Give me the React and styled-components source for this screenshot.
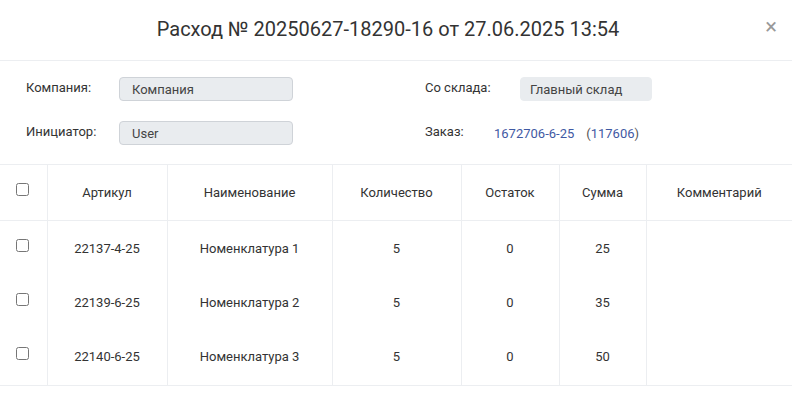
import React from "react";
import styled, { createGlobalStyle } from "styled-components";

const GlobalStyle = createGlobalStyle`
  html, body {
    margin: 0;
    padding: 0;
    background: #fff;
  }
  body {
    font-family: Roboto, "Liberation Sans", sans-serif;
    color: #333;
  }
`;

const rows = [
  { id: 1, sku: "22137-4-25", name: "Номенклатура 1", qty: 5, rest: 0, sum: 25 },
  { id: 2, sku: "22139-6-25", name: "Номенклатура 2", qty: 5, rest: 0, sum: 35 },
  { id: 3, sku: "22140-6-25", name: "Номенклатура 3", qty: 5, rest: 0, sum: 50 },
];

const App = () => {
  return (
    <Modal>
      <GlobalStyle />
      <Header>
        <Title>Расход № 20250627-18290-16 от 27.06.2025 13:54</Title>
        <Close>×</Close>
      </Header>

      {/* шапка документа: компания, склад, инициатор, заказ */}
      <Info>
        <InfoColumn>
          <InfoRow>
            <Label width="93px">Компания:</Label>
            <Field width="174px" bordered>Компания</Field>
          </InfoRow>
          <InfoRow>
            <Label width="93px">Инициатор:</Label>
            <Field width="174px" bordered>User</Field>
          </InfoRow>
        </InfoColumn>
        <InfoColumn>
          <InfoRow>
            <Label width="95px">Со склада:</Label>
            <Field width="132px">Главный склад</Field>
          </InfoRow>
          <InfoRow>
            <Label width="69px">Заказ:</Label>
            <Link href="#">1672706-6-25</Link>
            <Paren>
              (<Link href="#">117606</Link>)
            </Paren>
          </InfoRow>
        </InfoColumn>
      </Info>

      <Table>
        <colgroup>
          <col style={{ width: 47 }} />
          <col style={{ width: 120 }} />
          <col style={{ width: 165 }} />
          <col style={{ width: 129 }} />
          <col style={{ width: 98 }} />
          <col style={{ width: 87 }} />
          <col />
        </colgroup>
        <thead>
          <tr>
            <Th check>
              <Check type="checkbox" />
            </Th>
            <Th>Артикул</Th>
            <Th>Наименование</Th>
            <Th>Количество</Th>
            <Th>Остаток</Th>
            <Th>Сумма</Th>
            <Th>Комментарий</Th>
          </tr>
        </thead>
        <tbody>
          {rows.map((row) => (
            <Row key={row.id}>
              <Td check>
                <Check type="checkbox" />
              </Td>
              <Td>{row.sku}</Td>
              <Td>{row.name}</Td>
              <Td>{row.qty}</Td>
              <Td>{row.rest}</Td>
              <Td>{row.sum}</Td>
              <Td></Td>
            </Row>
          ))}
        </tbody>
      </Table>
    </Modal>
  );
};

const Modal = styled.div`
  width: 792px;
  background: #fff;
`;

const Header = styled.div`
  position: relative;
  display: flex;
  align-items: center;
  justify-content: center;
  height: 60px;
  padding-right: 16px;
  border-bottom: 1px solid #eceef1;
`;

const Title = styled.h1`
  margin: 0 0 2px 0;
  font-size: 20px;
  font-weight: 400;
  color: #333;
`;

const Close = styled.span`
  position: absolute;
  right: 15px;
  top: 16px;
  font-size: 22px;
  line-height: 22px;
  color: #999;
  cursor: pointer;
`;

const Info = styled.div`
  display: flex;
  padding: 16px 0 19px 26px;
  border-bottom: 1px solid #eceef1;
`;

const InfoColumn = styled.div`
  display: flex;
  flex-direction: column;
  gap: 20px;
  width: 399px;
  flex-shrink: 0;

  &:last-child {
    width: auto;
    flex: 1;
  }
`;

const InfoRow = styled.div`
  display: flex;
  align-items: center;
  height: 24px;
  font-size: 13px;
`;

const Label = styled.span`
  width: ${(p) => p.width};
  flex-shrink: 0;
  margin-top: -4px;
  color: #333;
`;

const Field = styled.div`
  box-sizing: border-box;
  width: ${(p) => p.width};
  height: 24px;
  padding: 0 ${(p) => (p.bordered ? "12px" : "9px")};
  display: flex;
  align-items: center;
  background: #e9ecef;
  border: 1px solid ${(p) => (p.bordered ? "#cfd3d8" : "#e9ecef")};
  border-radius: 4px;
  color: #444;
`;

const Link = styled.a`
  color: #3f59a3;
  text-decoration: none;
`;

const Paren = styled.span`
  margin-left: 12px;
  color: #555;
`;

const Table = styled.table`
  width: 792px;
  border-collapse: collapse;
  table-layout: fixed;
  font-size: 13px;
  border-bottom: 1px solid #eceef1;
`;

const Th = styled.th`
  height: 55px;
  font-weight: 400;
  text-align: ${(p) => (p.check ? "left" : "center")};
  padding: ${(p) => (p.check ? "0 0 0 13px" : "0")};
  border-right: 1px solid #eceef1;
  border-bottom: 1px solid #eceef1;
  color: #333;

  &:last-child {
    border-right: none;
  }
`;

const Row = styled.tr`
  &:last-child > td {
    padding-bottom: 2px;
  }
`;

const Td = styled.td`
  height: 54px;
  text-align: ${(p) => (p.check ? "left" : "center")};
  padding: ${(p) => (p.check ? "0 0 0 13px" : "0")};
  border-right: 1px solid #eceef1;
  color: #333;

  &:last-child {
    border-right: none;
  }
`;

const Check = styled.input`
  margin: 0 0 6px 3px;
  vertical-align: middle;
`;

export default App;
